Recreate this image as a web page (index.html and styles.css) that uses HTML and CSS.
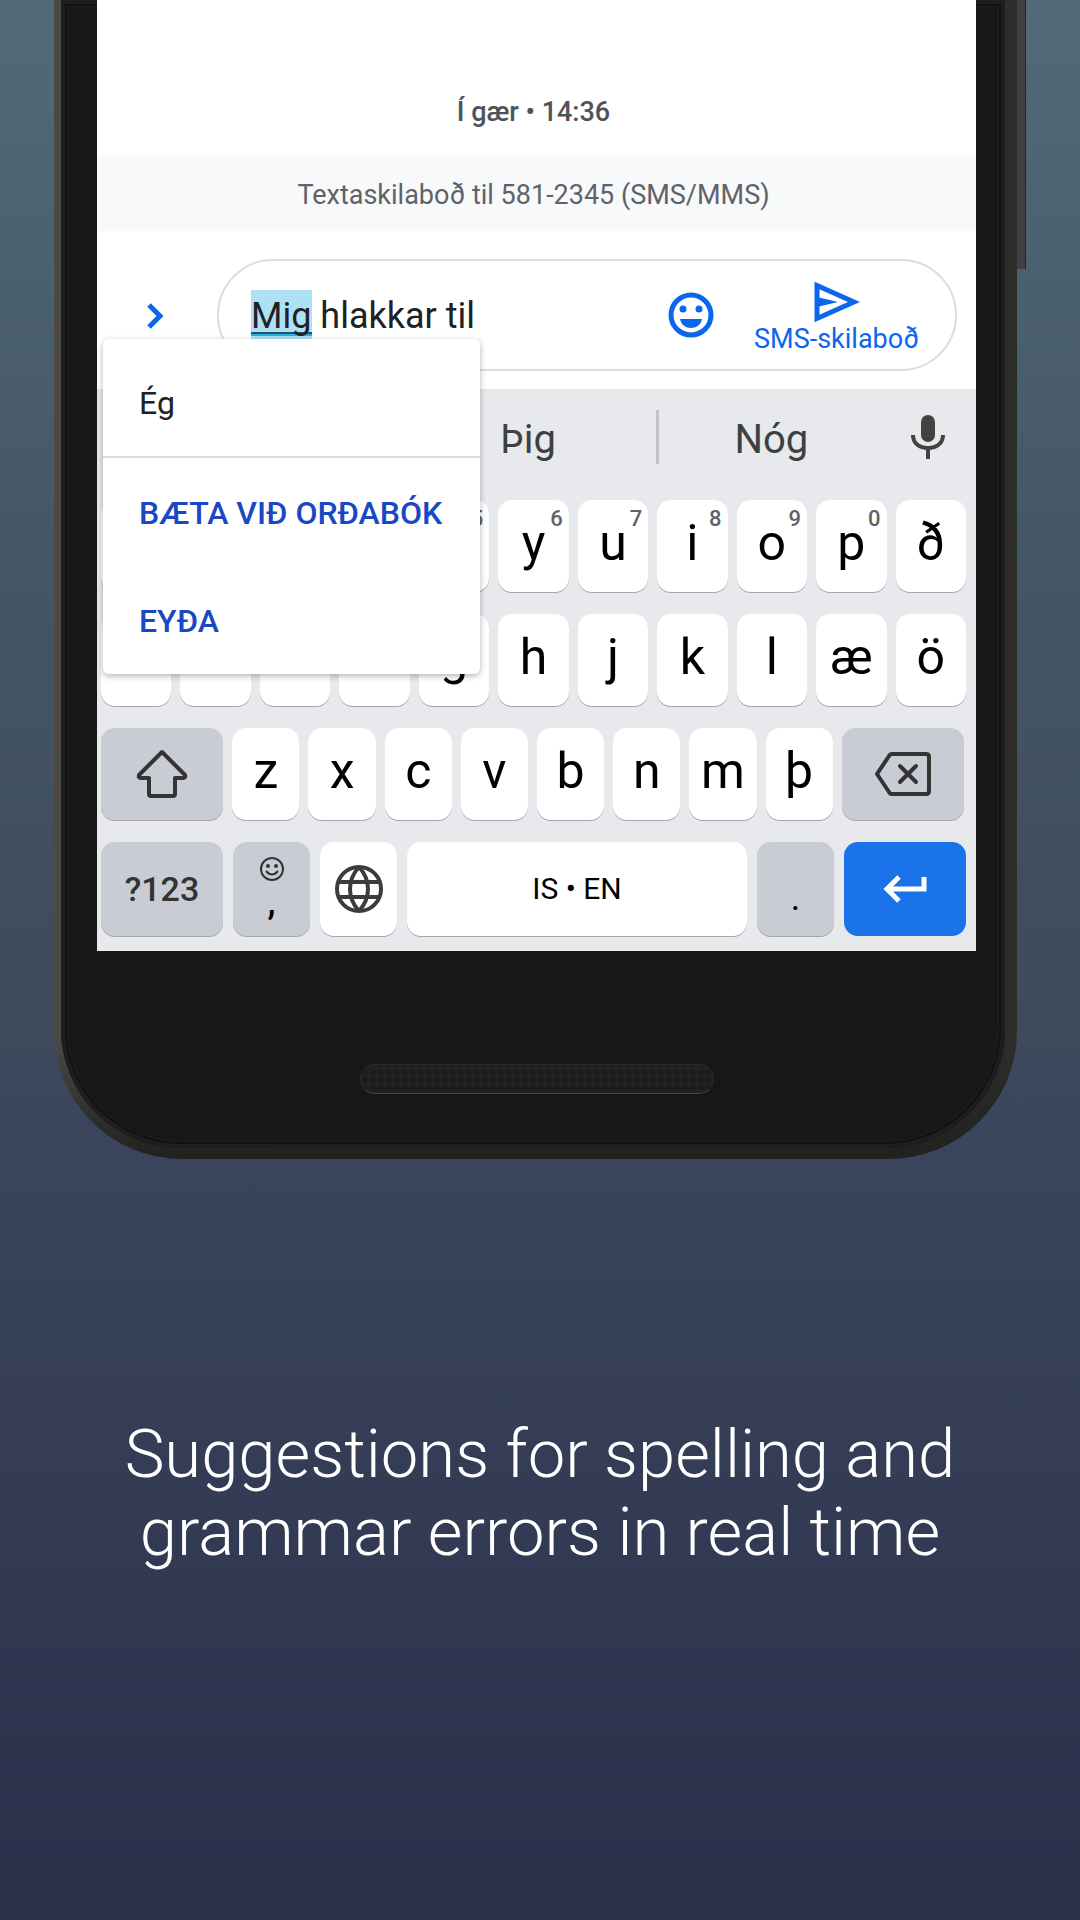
FILE: index.html
```html
<!DOCTYPE html>
<html lang="is">
<head>
<meta charset="utf-8">
<meta name="viewport" content="width=device-width, initial-scale=1">
<title>Keyboard suggestions</title>
<link rel="stylesheet" href="styles.css">
</head>
<body>
<main class="page">
  <div class="phone">
    <div class="power"></div>
    <div class="bezel">
      <div class="screen">
        <p class="timestamp">Í gær • 14:36</p>
        <p class="notice">Textaskilaboð til 581-2345 (SMS/MMS)</p>
        <div class="compose">
          <button class="plain expand" type="button" aria-label="Meira">
            <svg width="18" height="28" viewBox="0 0 18 28"><path d="M3 3l11 11L3 25" fill="none" stroke="#0b66ee" stroke-width="5"/></svg>
          </button>
          <div class="pill">
            <div class="field">
              <span class="highlight"></span>
              <input class="message" type="text" aria-label="Skilaboð" value="Mig hlakkar til">
            </div>
            <button class="plain" type="button" aria-label="Emoji">
              <svg width="46" height="46" viewBox="0 0 46 46"><circle cx="23" cy="23" r="20" fill="none" stroke="#0b66ee" stroke-width="5"/><circle cx="15" cy="17" r="3.500" fill="#0b66ee"/><circle cx="31" cy="17" r="3.500" fill="#0b66ee"/><path d="M12 27h22c-1 6-6 9-11 9s-10-3-11-9z" fill="#0b66ee"/></svg>
            </button>
            <button class="plain send" type="button">
              <svg width="46" height="42" viewBox="0 0 46 42"><path d="M3 4.500L40 21 3 37.500z" fill="none" stroke="#0b66ee" stroke-width="5"/><path d="M3 16l21 5-21 5z" fill="#0b66ee"/></svg>
              <span>SMS-skilaboð</span>
            </button>
          </div>
        </div>
        <div class="keyboard">
          <div class="strip">
            <button class="plain word first" type="button" aria-label="Mig"></button>
            <button class="plain word second" type="button">Þig</button>
            <button class="plain word third" type="button">Nóg</button>
            <button class="plain mic" type="button" aria-label="Tala">
              <svg width="34" height="46" viewBox="0 0 34 46"><rect x="10" y="1" width="14" height="27" rx="7" fill="#424242"/><path d="M2 21c0 8 6 13 15 13s15-5 15-13M17 34v11" fill="none" stroke="#424242" stroke-width="4"/></svg>
            </button>
          </div>
          <div class="keys">
            <div class="row">
              <button class="key" type="button" aria-label="q"></button>
              <button class="key" type="button" aria-label="w"></button>
              <button class="key" type="button" aria-label="e"></button>
              <button class="key" type="button" aria-label="r"></button>
              <button class="key" type="button" aria-label="t"><sup>5</sup></button>
              <button class="key" type="button">y<sup>6</sup></button>
              <button class="key" type="button">u<sup>7</sup></button>
              <button class="key" type="button">i<sup>8</sup></button>
              <button class="key" type="button">o<sup>9</sup></button>
              <button class="key" type="button">p<sup>0</sup></button>
              <button class="key" type="button">ð</button>
            </div>
            <div class="row">
              <button class="key" type="button">a</button>
              <button class="key" type="button">s</button>
              <button class="key" type="button">d</button>
              <button class="key" type="button">f</button>
              <button class="key" type="button">g</button>
              <button class="key" type="button">h</button>
              <button class="key" type="button">j</button>
              <button class="key" type="button">k</button>
              <button class="key" type="button">l</button>
              <button class="key" type="button">æ</button>
              <button class="key" type="button">ö</button>
            </div>
            <div class="row letters">
              <button class="key gray" type="button" aria-label="Shift">
                <svg width="52" height="50" viewBox="0 0 52 50"><path d="M26 3L3 26q-1 3 2 3h8v16q0 2 2 2h22q2 0 2-2V29h8q3 0 2-3z" fill="none" stroke="#333" stroke-width="4" stroke-linejoin="round"/></svg>
              </button>
              <button class="key" type="button">z</button>
              <button class="key" type="button">x</button>
              <button class="key" type="button">c</button>
              <button class="key" type="button">v</button>
              <button class="key" type="button">b</button>
              <button class="key" type="button">n</button>
              <button class="key" type="button">m</button>
              <button class="key" type="button">þ</button>
              <button class="key gray" type="button" aria-label="Eyða staf">
                <svg width="58" height="46" viewBox="0 0 58 46"><path d="M18 3h34q3 0 3 3v34q0 3-3 3H18q-2 0-3-2L3 23 15 5q1-2 3-2z" fill="none" stroke="#333" stroke-width="4" stroke-linejoin="round"/><path d="M26 15l16 16M42 15L26 31" stroke="#333" stroke-width="4" stroke-linecap="round"/></svg>
              </button>
            </div>
            <div class="row bottom">
              <button class="key gray symbols" type="button">?123</button>
              <button class="key gray comma" type="button">
                <svg width="26" height="26" viewBox="0 0 26 26"><circle cx="13" cy="13" r="11" fill="none" stroke="#333" stroke-width="2"/><circle cx="9" cy="10" r="2" fill="#333"/><circle cx="17" cy="10" r="2" fill="#333"/><path d="M7 15q6 7 12 0" fill="none" stroke="#333" stroke-width="2"/></svg>
                <span>,</span>
              </button>
              <button class="key" type="button" aria-label="Tungumál">
                <svg width="50" height="50" viewBox="0 0 50 50"><g fill="none" stroke="#3c3c3c" stroke-width="4"><circle cx="25" cy="25" r="22"/><path d="M5 18h40M5 33h40M25 3C13 16 13 34 25 47M25 3c12 13 12 31 0 44"/></g></svg>
              </button>
              <button class="key space" type="button">IS • EN</button>
              <button class="key gray period" type="button">.</button>
              <button class="key enter" type="button" aria-label="Enter">
                <svg width="44" height="28" viewBox="0 0 44 28"><path d="M16 2L4 14l12 12M4 14h37V2" fill="none" stroke="#fff" stroke-width="5"/></svg>
              </button>
            </div>
          </div>
        </div>
        <div class="popup">
          <button class="plain option" type="button">Ég</button>
          <button class="plain action" type="button">BÆTA VIÐ ORÐABÓK</button>
          <button class="plain action" type="button">EYÐA</button>
        </div>
      </div>
      <div class="speaker"></div>
    </div>
  </div>
  <h1 class="caption" lang="en">Suggestions for spelling and<br>grammar errors in real time</h1>
</main>
</body>
</html>
```
FILE: styles.css
```css
* { box-sizing: border-box; }

body {
  margin: 0;
  font-family: Roboto, "Liberation Sans", sans-serif;
  color: #202124;
}

.page {
  min-height: 100vh;
  background: linear-gradient(#526a78, #445664 30%, #3d4b5c 54%, #3b465e 58%, #333a54 80%, #2a2f4a);
}

button, input { font: inherit; color: inherit; }
svg { display: block; }

.plain {
  border: 0;
  padding: 0;
  background: none;
}

/* Phone body */
.phone {
  position: relative;
  margin: 0 63px 0 54px;
  padding: 0 12px 11px 7px;
  border-radius: 0 0 128px 128px;
  background:
    linear-gradient(to top, #21211e, #21211e00 120px),
    linear-gradient(to right, #4b4a46, #2d2e2a);
}

.power {
  position: absolute;
  top: 0;
  right: -9px;
  width: 9px;
  height: 269px;
  background: #423f42;
  border-right: 1px solid #262427;
}

.bezel {
  padding: 0 29px 54px 36px;
  border-radius: 0 0 120px 120px;
  background: #171717;
  box-shadow: inset 0 0 0 4px #1e1e1e, inset 0 0 0 6px #111, inset 0 0 0 7px #202020;
}

.screen {
  position: relative;
  background: #fff;
}

.speaker {
  width: 354px;
  height: 30px;
  margin: 113px auto 0;
  border: 1px solid #2a2a2a;
  border-bottom-color: #444;
  border-radius: 15px;
  background: radial-gradient(circle, #191919 1px, #212121 3px) 0 3px / 8px 8px;
}

/* Conversation */
.timestamp {
  margin: 0;
  padding: 96px 6px 27px 0;
  font-size: 27px;
  font-weight: 500;
  line-height: 32px;
  text-align: center;
  color: #4f5358;
}

.notice {
  margin: 0;
  padding: 24px 6px 20px 0;
  background: #f7f9fb;
  font-size: 27px;
  line-height: 32px;
  text-align: center;
  color: #5f6368;
}

.compose {
  display: flex;
  align-items: center;
  padding: 28px 19px 18px 0;
}

.expand {
  display: flex;
  justify-content: center;
  width: 120px;
  padding: 2px 4px 0 0;
}

.pill {
  display: flex;
  flex: 1;
  align-items: center;
  height: 112px;
  padding: 0 36px 0 32px;
  border: 2px solid #dadce0;
  border-radius: 56px;
}

.field {
  position: relative;
  flex: 1;
  height: 50px;
}

.highlight {
  position: absolute;
  inset: 0 auto 0 0;
  width: 61px;
  background: linear-gradient(#aee1f6 42px, #30505c 42px, #30505c 44px, #22b2ea 44px, #22b2ea 46px, #aee1f6 46px);
}

.message {
  position: relative;
  width: 100%;
  height: 50px;
  padding: 2px 0 0;
  border: 0;
  background: none;
  font-size: 36px;
}

.send {
  display: flex;
  flex-direction: column;
  align-items: center;
  margin-left: 40px;
  padding-top: 6px;
  font-size: 27px;
  line-height: 32px;
  color: #0b66ee;
}

/* Keyboard */
.keyboard { background: #e8e9ed; }

.strip {
  display: flex;
  align-items: center;
  height: 111px;
  padding: 0 3px 15px 0;
}

.word {
  height: 54px;
  padding-top: 6px;
  font-size: 40px;
  line-height: 48px;
  color: #3c4043;
}

.first { flex: 305; }
.second { flex: 258; }
.third { flex: 226; border-left: 3px solid #c2c4c8; }

.mic {
  display: flex;
  flex: 90;
  justify-content: center;
}

.keys {
  display: flex;
  flex-direction: column;
  gap: 22px;
  padding: 0 10px 15px 4px;
}

.row {
  display: flex;
  gap: 9px;
}

.key {
  position: relative;
  display: flex;
  flex: 1 1 0;
  align-items: center;
  justify-content: center;
  min-width: 0;
  height: 92px;
  padding: 0 0 6px;
  border: 0;
  border-radius: 14px;
  background: #fff;
  box-shadow: 0 1px 0 #a4a6ab;
  font-size: 50px;
  line-height: 56px;
  color: #000;
}

.key sup {
  position: absolute;
  top: 7px;
  right: 6px;
  font-size: 22px;
  font-weight: 500;
  line-height: 24px;
  color: #5f6368;
}

.gray { background: #caccd5; }

.letters { padding-right: 2px; }
.letters .key { flex-grow: 67; }
.letters .gray { flex-grow: 122; padding-bottom: 0; }

.bottom { gap: 10px; }
.bottom .key { flex-grow: 77; height: 94px; padding: 0; }
.bottom .symbols, .bottom .enter { flex-grow: 122; }
.bottom .space { flex-grow: 340; font-size: 30px; }
.bottom .period { padding-top: 18px; font-size: 36px; }
.bottom .symbols { font-size: 34px; font-weight: 500; color: #333; }

.bottom .comma {
  flex-direction: column;
  font-size: 36px;
  font-weight: 500;
  line-height: 40px;
}

.bottom .enter {
  background: #1a73e8;
  box-shadow: none;
}

/* Spelling popup */
.popup {
  position: absolute;
  top: 339px;
  left: 6px;
  display: flex;
  flex-direction: column;
  width: 377px;
  border-radius: 6px;
  background: #fff;
  box-shadow: 0 2px 6px #0000004d;
}

.option, .action {
  height: 108px;
  padding: 2px 0 0 36px;
  font-size: 32px;
  text-align: left;
  white-space: nowrap;
}

.option {
  height: 119px;
  padding-top: 10px;
  border-bottom: 2px solid #dcdde0;
}

.action {
  font-weight: 500;
  color: #1a48c4;
}

/* Caption */
.caption {
  margin: 0;
  padding: 256px 20px 40px;
  font-size: 67px;
  font-weight: 300;
  line-height: 78px;
  text-align: center;
  color: #fff;
}
```
